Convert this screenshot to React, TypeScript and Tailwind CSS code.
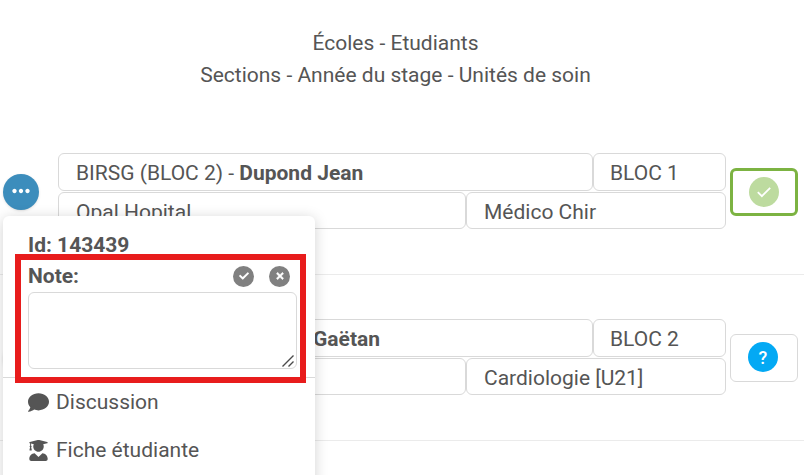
import React, { useState } from 'react';
import { FaCheck, FaComment, FaTimes, FaUserGraduate } from 'react-icons/fa';
import { MdMoreHoriz } from 'react-icons/md';

interface Stage {
    id: number;
    formation: string;
    student: string;
    bloc: string;
    hospital: string;
    unit: string;
    validated: boolean;
    menuOpen: boolean;
}

const stages: Stage[] = [
    { id: 143439, formation: 'BIRSG (BLOC 2) - ', student: 'Dupond Jean', bloc: 'BLOC 1', hospital: 'Opal Hopital', unit: 'Médico Chir', validated: true, menuOpen: true },
    { id: 143440, formation: '', student: 'Gaëtan', bloc: 'BLOC 2', hospital: '', unit: 'Cardiologie [U21]', validated: false, menuOpen: false },
];

const Cell: React.FC<{ className: string; children?: React.ReactNode }> = ({ className, children }) => (
    <div className={`truncate rounded-md border border-[#d9d9d9] ${className}`}>{children}</div>
);

const StatusButton: React.FC<{ validated: boolean }> = ({ validated }) => (
    <button
        type="button"
        aria-label={validated ? 'Validé' : 'En attente'}
        className={`flex h-12 w-[68px] shrink-0 items-center justify-center rounded-md bg-white ${validated ? 'border-3 border-[#7cb342]' : 'border border-[#d9d9d9] pb-0.5 pr-0.5'}`}
    >
        {validated ? (
            <span className="flex size-[30px] items-center justify-center rounded-full bg-[#bddb9f] text-white">
                <svg className="size-[18px]" viewBox="0 0 18 18" fill="none" stroke="currentColor" strokeWidth="1.8">
                    <path d="M2.8 9.2L6.9 13.2L15.2 4.9" />
                </svg>
            </span>
        ) : (
            <span className="flex size-[30px] items-center justify-center rounded-full bg-[#03a9f4] pt-0.5 text-lg font-medium text-white">?</span>
        )}
    </button>
);

const ActionMenu: React.FC<{ id: number }> = ({ id }) => {
    const [note, setNote] = useState('');

    return (
        <div className="absolute left-0 top-full z-10 mt-[6px] w-[312px] rounded-md bg-white pb-12 pt-3 shadow-[0_2px_14px_rgba(0,0,0,0.18)]">
            <p className="h-8 px-[25px] font-bold leading-[34px]">Id: {id}</p>
            <div className="relative border-b border-[#d9d9d9] pb-2 pl-[25px] pr-[18px]">
                <div className="flex h-8 items-center justify-between">
                    <label htmlFor={`note-${id}`} className="pt-0.5 font-bold">Note:</label>
                    <div className="flex gap-[15px] pr-[7px] text-white">
                        <button type="button" aria-label="Enregistrer la note" className="flex size-[21px] items-center justify-center rounded-full bg-[#808080]">
                            <FaCheck className="size-[10px]" />
                        </button>
                        <button type="button" aria-label="Effacer la note" onClick={() => setNote('')} className="flex size-[21px] items-center justify-center rounded-full bg-[#808080]">
                            <FaTimes className="size-[10px]" stroke="currentColor" strokeWidth={24} />
                        </button>
                    </div>
                </div>
                <div className="relative">
                    <textarea
                        id={`note-${id}`}
                        value={note}
                        onChange={(e) => setNote(e.target.value)}
                        className="block h-[77px] w-full resize-none rounded-md border border-[#d9d9d9] p-2 outline-none"
                    />
                    <svg className="pointer-events-none absolute bottom-[2px] right-[3px] size-[12px]" viewBox="0 0 12 12" fill="none" stroke="#4a4a4a" strokeWidth="1.4">
                        <path d="M0.5 11.5L11.5 0.5M6.5 11.5L11.5 6.5" />
                    </svg>
                </div>
                <div className="pointer-events-none absolute -bottom-[6px] -top-[6px] left-3 right-[9px] border-6 border-[#e81c1c]" />
            </div>
            <a href="#discussion" className="flex h-12 items-center gap-[7px] px-[25px]">
                <FaComment className="size-[21px]" />
                <span className="pt-0.5">Discussion</span>
            </a>
            <a href="#fiche" className="flex h-12 items-center gap-[7px] px-[25px]">
                <FaUserGraduate className="size-[21px]" />
                <span className="pt-0.5">Fiche étudiante</span>
            </a>
        </div>
    );
};

const StageRow: React.FC<{ stage: Stage }> = ({ stage }) => (
    <div className="flex items-center border-b border-[#ebebeb] pb-[45px] pl-[3px] pr-[6px] pt-11">
        <div className="relative shrink-0 pt-0.5">
            <button type="button" aria-label="Actions" className="flex size-9 items-center justify-center rounded-full bg-[#3c8dbc] pb-[3px] pr-px text-white shadow">
                <MdMoreHoriz className="size-[26px]" />
            </button>
            {stage.menuOpen && <ActionMenu id={stage.id} />}
        </div>
        <div className="ml-[19px] min-w-0 flex-1 leading-[38px]">
            <div className="flex">
                <Cell className={stage.formation ? 'h-[38px] flex-1 pl-[17px]' : 'h-[38px] flex-1 pl-[254px]'}>
                    {stage.formation}
                    <strong>{stage.student}</strong>
                </Cell>
                <Cell className="h-[38px] w-[133px] px-4">{stage.bloc}</Cell>
            </div>
            <div className="mt-px flex">
                <Cell className="h-[37px] flex-1 pl-[17px]">{stage.hospital}</Cell>
                <Cell className="h-[37px] w-[260px] pl-[17px]">{stage.unit}</Cell>
            </div>
        </div>
        <div className="ml-1 flex pt-0.5">
            <StatusButton validated={stage.validated} />
        </div>
    </div>
);

export default function App() {
    return (
        <main className="min-h-screen overflow-hidden bg-white font-['Roboto',sans-serif] text-[21px] text-[#555]">
            <header className="pb-[18px] pr-[13px] pt-[27px] text-center leading-8">
                <h1>Écoles - Etudiants</h1>
                <p>Sections - Année du stage - Unités de soin</p>
            </header>
            {stages.map((stage) => (
                <StageRow key={stage.id} stage={stage} />
            ))}
        </main>
    );
}
